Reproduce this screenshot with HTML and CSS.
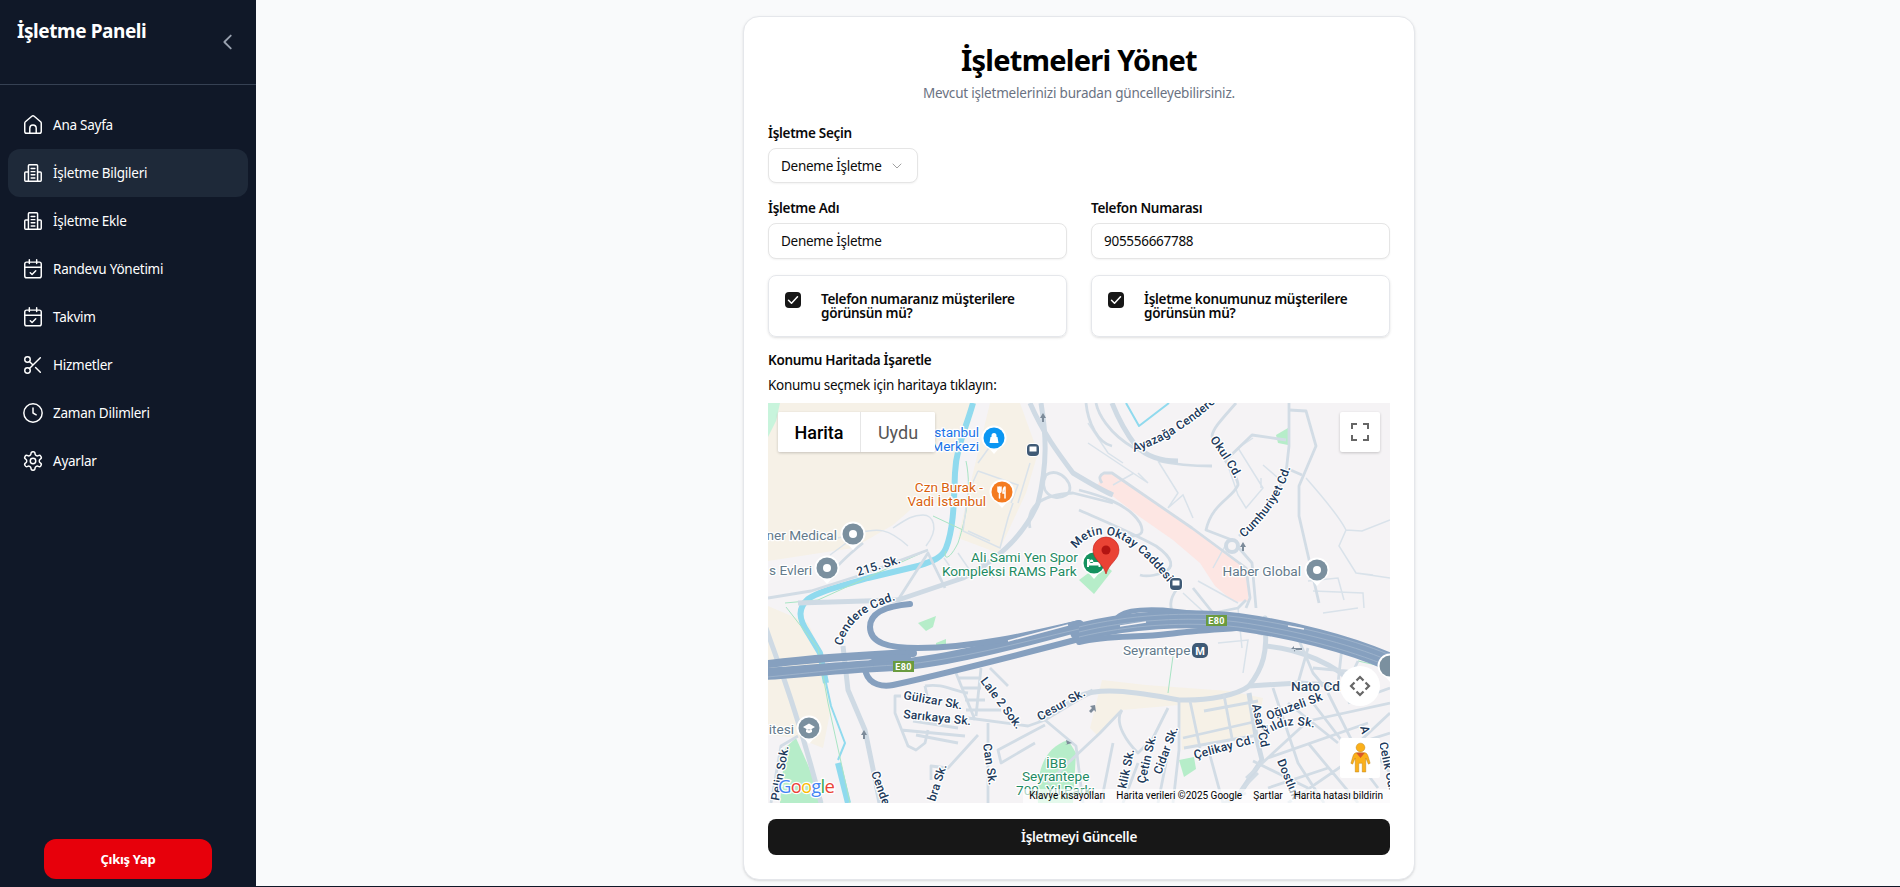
FILE: index.html
```html
<!DOCTYPE html>
<html lang="tr">
<head>
<meta charset="utf-8">
<title>İşletmeleri Yönet</title>
<link rel="stylesheet" href="styles.css">
</head>
<body>
<svg class="defs" width="0" height="0">
  <defs>
    <g id="i-build"><path d="M7 21V4a1 1 0 0 1 1-1h8a1 1 0 0 1 1 1v17"/><path d="M7 11H4a1 1 0 0 0-1 1v8a1 1 0 0 0 1 1h16a1 1 0 0 0 1-1v-8a1 1 0 0 0-1-1h-3"/><path d="M10 7h4M10 10.500h4M10 14h4M10 17.500h4"/></g>
    <g id="i-cal"><rect x="3" y="4.500" width="18" height="17" rx="2"/><path d="M8 2v4M16 2v4M3 10h18M9 16l2 2 4-4"/></g>
    <g id="pinbase"><path d="M-12.500 0a12.500 12.500 0 1 1 25 0c0 6-5 9-9 12l-3.500 4-3.500-4c-4-3-9-6-9-12z" fill="#fff"/></g>
  </defs>
</svg>
<div class="app">
  <aside class="sidebar">
    <div class="side-head">
      <h2 class="brand">İşletme Paneli</h2>
      <svg class="collapse" viewBox="0 0 24 24"><path d="M15 5l-7 7 7 7"/></svg>
    </div>
    <nav class="nav">
      <a class="nav-item"><svg class="ico" viewBox="0 0 24 24"><path d="M3 10a2 2 0 0 1 .709-1.528l7-5.999a2 2 0 0 1 2.582 0l7 5.999A2 2 0 0 1 21 10v9a2 2 0 0 1-2 2H5a2 2 0 0 1-2-2z"/><path d="M8.500 21v-5.500a3.500 3.500 0 0 1 7 0V21"/></svg><span>Ana Sayfa</span></a>
      <a class="nav-item active"><svg class="ico" viewBox="0 0 24 24"><use href="#i-build"/></svg><span>İşletme Bilgileri</span></a>
      <a class="nav-item"><svg class="ico" viewBox="0 0 24 24"><use href="#i-build"/></svg><span>İşletme Ekle</span></a>
      <a class="nav-item"><svg class="ico" viewBox="0 0 24 24"><use href="#i-cal"/></svg><span>Randevu Yönetimi</span></a>
      <a class="nav-item"><svg class="ico" viewBox="0 0 24 24"><use href="#i-cal"/></svg><span>Takvim</span></a>
      <a class="nav-item"><svg class="ico" viewBox="0 0 24 24"><circle cx="6" cy="6" r="3"/><circle cx="6" cy="18" r="3"/><path d="M8.120 8.120 12 12M20 4 8.120 15.880M14.800 14.800 20 20"/></svg><span>Hizmetler</span></a>
      <a class="nav-item"><svg class="ico" viewBox="0 0 24 24"><circle cx="12" cy="12" r="10"/><path d="M12 6.500V12l3.500 2"/></svg><span>Zaman Dilimleri</span></a>
      <a class="nav-item"><svg class="ico" viewBox="0 0 24 24"><path d="M12.220 2h-.44a2 2 0 0 0-2 2v.18a2 2 0 0 1-1 1.730l-.43.25a2 2 0 0 1-2 0l-.15-.08a2 2 0 0 0-2.730.73l-.22.38a2 2 0 0 0 .73 2.730l.15.1a2 2 0 0 1 1 1.720v.51a2 2 0 0 1-1 1.740l-.15.09a2 2 0 0 0-.73 2.730l.22.38a2 2 0 0 0 2.730.73l.15-.08a2 2 0 0 1 2 0l.43.25a2 2 0 0 1 1 1.730V20a2 2 0 0 0 2 2h.44a2 2 0 0 0 2-2v-.18a2 2 0 0 1 1-1.730l.43-.25a2 2 0 0 1 2 0l.15.08a2 2 0 0 0 2.730-.73l.22-.39a2 2 0 0 0-.73-2.730l-.15-.08a2 2 0 0 1-1-1.740v-.5a2 2 0 0 1 1-1.740l.15-.09a2 2 0 0 0 .73-2.730l-.22-.38a2 2 0 0 0-2.730-.73l-.15.08a2 2 0 0 1-2 0l-.43-.25a2 2 0 0 1-1-1.730V4a2 2 0 0 0-2-2z"/><circle cx="12" cy="12" r="3"/></svg><span>Ayarlar</span></a>
    </nav>
    <div class="side-foot"><button class="logout">Çıkış Yap</button></div>
  </aside>

  <main class="main">
    <section class="card">
      <header class="card-head">
        <h1 class="title">İşletmeleri Yönet</h1>
        <p class="subtitle">Mevcut işletmelerinizi buradan güncelleyebilirsiniz.</p>
      </header>

      <div class="field sel-field">
        <label class="label">İşletme Seçin</label>
        <div class="select"><span>Deneme İşletme</span><svg class="sel-arrow" viewBox="0 0 24 24"><path d="M6 9l6 6 6-6"/></svg></div>
      </div>

      <div class="grid two">
        <div class="field"><label class="label">İşletme Adı</label><div class="input">Deneme İşletme</div></div>
        <div class="field"><label class="label">Telefon Numarası</label><div class="input">905556667788</div></div>
      </div>

      <div class="grid two checks">
        <div class="check-card"><span class="check"><svg viewBox="0 0 16 16"><path d="M3.500 8.300l3 3 6-6.500"/></svg></span><span class="check-text">Telefon numaranız müşterilere görünsün mü?</span></div>
        <div class="check-card"><span class="check"><svg viewBox="0 0 16 16"><path d="M3.500 8.300l3 3 6-6.500"/></svg></span><span class="check-text">İşletme konumunuz müşterilere görünsün mü?</span></div>
      </div>

      <h3 class="map-title">Konumu Haritada İşaretle</h3>
      <p class="map-hint">Konumu seçmek için haritaya tıklayın:</p>

      <div class="map">
        <svg class="map-svg" viewBox="0 0 622 400" width="622" height="400">
          <defs>
            <path id="p-cendere" d="M74 243C80 218 100 203 140 194"/>
            <path id="p-metin" d="M308 146C330 118 362 130 405 186"/>
            <path id="p-cumh" d="M476 135C495 118 512 98 522 66"/>
            <path id="p-okul" d="M442 37C450 48 462 64 472 86"/>
            <path id="p-ayaz" d="M366 49C395 40 425 22 460 -12"/>
            <path id="p-cesur" d="M272 318L336 282"/>
            <path id="p-yildiz" d="M498 333C512 322 525 319 552 326"/>
          </defs>
          <rect class="bg" width="622" height="400"/>
          <!-- land use -->
          <path class="beige" d="M0 0H208L192 55 185 100 150 100 125 122 85 145 0 158Z"/>
          <path class="beige" d="M222 0H252L270 50 258 90 230 150 190 135 205 70Z"/>
          <path class="beige" d="M0 203L40 220 52 247 63 305 55 345 30 335 0 332Z"/>
          <path class="beige" d="M334 277L378 282 461 288 495 295 488 330 414 347 411 302 354 307 330 333 322 325Z"/>
          <path class="mint" d="M0 0H12L8 18 0 34Z"/>
          <path class="park" d="M311 177L326 191 344 168 334 160Z"/>
          <path class="park" d="M150 220L168 213 165 224 158 228Z"/>
          <path class="park" d="M168 240L178 236 178 246 168 246Z"/>
          <path class="park" d="M508 32L520 25V42L510 40Z"/>
          <path class="park" d="M270 400C268 370 275 345 300 337L308 350 305 400Z"/>
          <path class="park" d="M17 345L28 335 40 362 55 400H12Z"/>
          <path class="park" d="M411 357L426 354 428 366 416 374Z"/>
          <path class="pink" d="M334 70L346 70 424 125 480 165 480 198 466 199 447 183 432 160 405 137 372 114 330 82Z"/>
          <!-- rivers -->
          <path class="river" d="M205 0C198 25 188 45 187 70 186 95 186 125 178 145 174 155 165 158 150 163L100 175C70 184 52 188 40 196 30 205 30 215 40 230L52 250 58 280"/>
          <path class="river thin" d="M58 280L63 303 77 340 70 357"/>
          <path class="river" d="M70 360L80 400"/>
          <path class="river thin" d="M358 0L371 23 401 0"/>
          <!-- thin paths -->
          <g class="thin-green">
            <path d="M198 58C205 90 195 125 190 140 180 160 175 155 178 148"/>
            <path d="M165 113L195 127M17 200L50 197 160 147"/>
            <path d="M18 204L50 245 60 300 82 400M405 253L400 290M590 258L622 265"/>
          </g>
          <!-- small roads -->
          <g class="r-small">
            <path d="M210 60L228 35M210 68L250 82 243 100M210 68L200 90 195 128 232 145 240 115 245 100M200 128L222 138"/>
            <path d="M176 155L190 175M190 150L205 172M205 150L225 175M250 100L262 60"/>
            <path d="M140 143C120 125 110 125 90 130L70 135M85 135L62 152M158 143C172 125 165 112 155 112 145 112 140 115 125 125"/>
            <path d="M320 20L340 50 355 60M320 40L380 80 370 70M345 82L366 70M390 58L410 90 400 105 415 92 425 115"/>
            <path d="M458 57L470 92 478 105 495 85 470 45 485 35M495 62L510 75M493 75V85"/>
            <path d="M538 75C560 100 572 115 578 127L571 143 588 170 605 172M578 127L594 128 622 117M588 170L622 175"/>
            <path d="M540 178L570 175 576 197M545 188L595 190 596 205M555 210L590 205"/>
            <path d="M415 190L440 213M430 178L470 200"/>
            <path d="M457 143L445 165"/>
            <path d="M450 240L480 237 475 270M474 245L470 205"/>
          </g>
          <g class="r-mid">
            <path d="M311 87C330 92 360 100 372 120 378 132 370 133 362 133"/>
            <path d="M311 107C340 120 360 128 388 143 405 155 408 165 394 170 385 173 378 174 372 172"/>
            <path d="M344 43C330 40 320 20 318 0M366 45C340 30 330 10 328 0"/>
            <path d="M391 58C400 60 420 63 444 63"/>
            <path d="M409 186C402 195 400 205 408 215M425 185L445 210 470 205 478 197"/>
            <path d="M334 80C330 75 332 72 336 70L344 70 424 125 478 165 482 195 478 205"/>
            <path d="M444 33C445 25 455 15 468 0M444 33C448 50 470 70 470 82 465 95 444 100 438 127L464 137"/>
            <path d="M521 0V43L518 70 501 107 471 133"/>
            <path d="M458 57L484 32 518 37"/>
            <path d="M521 7L538 8 548 43 531 83V113L551 200"/>
            <path d="M518 65L534 72"/>
            <path d="M464 137L484 160 488 205"/>
            <path d="M130 197L160 150 177 185"/>
            <path d="M0 195L43 188 90 173 160 147"/>
            <path d="M60 175C70 160 85 148 95 140"/>
            <path d="M278 72C292 62 310 85 298 92 285 100 270 88 278 72Z"/>
            <path d="M262 125C258 105 270 92 305 90L345 100"/>
          </g>
          <circle class="rb" cx="464" cy="143" r="6"/>
          <g class="r-big">
            <path d="M273 0C278 30 280 60 270 100 255 135 225 160 195 175L130 197 30 200"/>
            <path d="M262 0C275 30 290 50 305 70 330 85 340 90 345 92"/>
            <path d="M344 0C350 15 358 30 368 43 380 55 395 58 410 58"/>
            <path d="M75 243L80 287 97 327 112 400"/>
            <path d="M-2 225C10 260 30 310 53 400"/>
            <path d="M481 283C495 265 500 250 497 215L492 232"/>
            <path d="M270 316L325 288"/>
            <path d="M311 293C330 285 360 287 411 297 440 298 470 292 481 283L531 280 578 283"/>
            <path d="M481 290L488 333 494 357 472 390"/>
            <path d="M496 243C530 245 570 262 590 285"/>
          </g>
          <g class="r-mid">
            <path d="M188 270L207 317M213 265L208 313M190 275H213M195 285H213M197 297H217M198 307H233"/>
            <path d="M200 315L260 323 277 317 310 297M220 320V400M210 332L180 365 163 363V377"/>
            <path d="M133 293H127V310L140 343 148 347 157 340 160 327M133 327L197 333M157 283L160 297M157 283C175 280 185 288 200 290"/>
            <path d="M277 322L230 347 233 360 267 340M145 318L190 325M148 332L190 340"/>
            <path d="M277 317L308 343 315 400M30 333L13 343 3 400M222 265L240 283"/>
            <path d="M354 307L332 330 300 360 280 380M354 307C345 320 360 340 370 350L385 335 400 305M411 297V347L405 400M422 298L432 345M456 292L464 335M436 308L490 298M415 335L490 318M416 345L490 332"/>
            <path d="M333 400L345 340M355 400L370 360M390 400L400 350M440 345L455 400 478 390M478 375L540 318 622 300M500 355L600 320M520 400L600 345M540 340L590 400M560 290L600 370M600 340L622 370M505 285L530 360 556 400M540 245L530 280M590 258L575 290M460 400L490 370M622 310L590 340M530 235L545 270 555 282M575 235L570 280M545 265L600 270"/>
            <path d="M520 300L570 340M545 300L610 385M485 358L540 385M500 385L560 365M575 345L622 330M580 300L622 285"/>
          </g>
          <!-- highways -->
          <g class="hw">
            <path class="w10" d="M-2 271C40 268 90 263 130 262 180 258 250 240 311 223"/>
            <path class="w6" d="M0 261C40 256 100 252 145 250"/>
            <path class="w5" d="M142 201C118 203 102 210 102 224 102 240 120 245 150 245 205 245 260 232 311 220"/>
            <path class="w5" d="M140 254C105 254 95 262 98 270 102 282 115 284 125 282 170 272 250 252 311 236"/>
            <path class="w14" d="M311 229C360 217 420 213 470 219 520 226 580 240 624 260"/>
            <path class="w5" d="M311 239C340 232 370 235 400 231 430 227 460 226 480 224"/>
            <path class="w4" d="M346 220C350 207 372 206 395 207L442 212"/>
          </g>
          <g class="hw-lane">
            <path d="M0 274C60 268 100 263 130 262 190 257 250 240 311 226M311 229C360 217 420 213 470 219 520 226 580 240 622 258M311 224C360 212 420 208 470 214 520 221 580 234 622 252M311 234C360 222 420 218 470 224 520 231 580 246 622 264"/>
          </g>
          <path class="hw-white" d="M352 223L378 219M520 223L536 226M240 238L300 222"/>
          <!-- shields -->
          <g class="shield"><rect x="125" y="258" width="21" height="11"/><text x="135.500" y="267">E80</text></g>
          <g class="shield"><rect x="438" y="212" width="21" height="11"/><text x="448.500" y="221">E80</text></g>
          <!-- place labels -->
          <text class="lb blue" x="211" y="34" text-anchor="end">İstanbul</text>
          <text class="lb blue" x="211" y="48" text-anchor="end">Merkezi</text>
          <text class="lb orange" x="215" y="89" text-anchor="end">Czn Burak -</text>
          <text class="lb orange" x="218" y="103" text-anchor="end">Vadi İstanbul</text>
          <text class="lb gray" x="69" y="137" text-anchor="end">ner Medical</text>
          <text class="lb gray" x="44" y="172" text-anchor="end">s Evleri</text>
          <text class="lb gray" x="26" y="331" text-anchor="end">itesi</text>
          <text class="lb gray" x="533" y="173" text-anchor="end">Haber Global</text>
          <text class="lb gray" x="355" y="252">Seyrantepe</text>
          <text class="lb green" x="203" y="159">Ali Sami Yen Spor</text>
          <text class="lb green" x="174" y="173">Kompleksi RAMS Park</text>
          <text class="lb green" x="278" y="365">İBB</text>
          <text class="lb green" x="254" y="378">Seyrantepe</text>
          <text class="lb green" x="248" y="392">700. Yıl Parkı</text>
          <text class="lb navy" x="523" y="288">Nato Cd.</text>
          <!-- road labels -->
          <text class="rl" transform="translate(90 173) rotate(-17)">215. Sk.</text>
          <text class="rl"><textPath href="#p-cendere">Cendere Cad.</textPath></text>
          <text class="rl"><textPath href="#p-metin">Metin Oktay Caddesi</textPath></text>
          <text class="rl"><textPath href="#p-cumh">Cumhuriyet Cd.</textPath></text>
          <text class="rl"><textPath href="#p-okul">Okul Cd.</textPath></text>
          <text class="rl"><textPath href="#p-ayaz">Ayazağa Cendere</textPath></text>
          <text class="rl" transform="translate(212 278) rotate(53)">Lale 2 Sok.</text>
          <text class="rl" transform="translate(135 296) rotate(10)">Gülizar Sk.</text>
          <text class="rl" transform="translate(135 315) rotate(6)">Sarıkaya Sk.</text>
          <text class="rl" transform="translate(215 341) rotate(82)">Can Sk.</text>
          <text class="rl" transform="translate(103 370) rotate(70)">Cendere</text>
          <text class="rl" transform="translate(167 399) rotate(-72)">bra Sk.</text>
          <text class="rl" transform="translate(11 398) rotate(-80)">Pelin Sok.</text>
          <text class="rl"><textPath href="#p-cesur">Cesur Sk.</textPath></text>
          <text class="rl" transform="translate(500 317) rotate(-20)">Oğuzeli Sk</text>
          <text class="rl"><textPath href="#p-yildiz">Yıldız Sk.</textPath></text>
          <text class="rl" transform="translate(427 356) rotate(-15)">Çelikay Cd.</text>
          <text class="rl" transform="translate(484 302) rotate(78)">Asaf Cd</text>
          <text class="rl" transform="translate(509 358) rotate(68)">Dostluk</text>
          <text class="rl" transform="translate(393 372) rotate(-70)">Cidar Sk.</text>
          <text class="rl" transform="translate(377 381) rotate(-77)">Çetin Sk.</text>
          <text class="rl" transform="translate(358 386) rotate(-78)">klik Sk.</text>
          <text class="rl" transform="translate(611 340) rotate(78)">Çelik Cd.</text>
          <text class="rl" transform="translate(592 324) rotate(75)">A</text>
          <!-- POI pins -->
          <g transform="translate(226 35)"><use href="#pinbase"/><circle r="10.500" class="c-blue"/><path class="glyph" d="M-4.500 5h9l-1-6h-7zM-2.500 -1v-1.500a2.500 2.500 0 0 1 5 0V-1"/></g>
          <g transform="translate(234 89)"><use href="#pinbase"/><circle r="10.500" class="c-orange"/><path class="stroke-w" d="M-4 -5v4a1.500 1.500 0 0 0 3 0v-4M-2.500 -5V6M3 -5v11M3 -5c-2 1-2 4-2 6h2"/></g>
          <g transform="translate(85 131)"><use href="#pinbase"/><circle r="10.500" class="c-gray"/><circle r="4" class="c-white"/></g>
          <g transform="translate(59 165)"><use href="#pinbase"/><circle r="10.500" class="c-gray"/><circle r="4" class="c-white"/></g>
          <g transform="translate(549 167)"><use href="#pinbase"/><circle r="10.500" class="c-gray"/><circle r="4" class="c-white"/></g>
          <g transform="translate(622 263)"><use href="#pinbase"/><circle r="10.500" class="c-gray"/></g>
          <g transform="translate(41 325)"><use href="#pinbase"/><circle r="10.500" class="c-gray"/><path class="glyph" d="M-6 -1L0 -4.500 6 -1 0 2.500ZM-3 1.500v2.500c2 1.500 4 1.500 6 0v-2.500"/></g>
          <g transform="translate(326 160)"><use href="#pinbase"/><circle r="10.500" class="c-green"/><path class="glyph" d="M-7 -4h2.500v3h8c2 0 3 1.500 3 3v2h-2v-1.500h-9.500v1.500h-2zM-2.500 -3.500a1.800 1.800 0 1 0 .1 0z"/></g>
          <!-- transit -->
          <g transform="translate(265 47)"><rect x="-7" y="-7" width="14" height="14" rx="5" class="tr-halo"/><rect x="-6" y="-6" width="12" height="12" rx="4" class="c-slate"/><path class="glyph" d="M-3.500 -3.500h7v5h-7zM-1.500 3.500v-2M1.500 3.500v-2"/></g>
          <g transform="translate(408 181)"><rect x="-7" y="-7" width="14" height="14" rx="5" class="tr-halo"/><rect x="-6" y="-6" width="12" height="12" rx="4" class="c-slate"/><path class="glyph" d="M-3.500 -3.500h7v5h-7zM-1.500 3.500v-2M1.500 3.500v-2"/></g>
          <g transform="translate(432 248)"><rect x="-8" y="-8" width="16" height="15" rx="5" class="c-slate"/><text class="metro" x="0" y="4">M</text></g>
          <!-- direction arrows -->
          <path class="arrow" d="M275 10l-3 5h2v4h2v-4h2zM475 139l-3 5h2v4h2v-4h2zM96 327l-3 5h2v4h2v-4h2zM304 340l-6-3 1 4-2 1zM327 302l-5 1 2 2-3 3 2 2 3-3 2 2zM528 246h-5l3-3v2h8v2h-8v2z"/>
          <!-- Google wordmark -->
          <text class="glogo" x="10" y="390"><tspan class="g-b">G</tspan><tspan class="g-r">o</tspan><tspan class="g-y">o</tspan><tspan class="g-b">g</tspan><tspan class="g-g">l</tspan><tspan class="g-r">e</tspan></text>
          <!-- marker -->
          <path class="m-red" d="M338 171C335 160 325 157 325 147a13 13 0 0 1 26 0C351 157 341 160 338 171Z"/>
          <circle class="m-dark" cx="338" cy="147" r="4.500"/>
        </svg>

        <div class="map-type">
          <button class="mt-btn on">Harita</button>
          <button class="mt-btn">Uydu</button>
        </div>
        <button class="ctl fullscreen"><svg viewBox="0 0 18 18"><path d="M0 6V0h6v2H2v4zM12 0h6v6h-2V2h-4zM18 12v6h-6v-2h4v-4zM6 18H0v-6h2v4h4z"/></svg></button>
        <button class="ctl pan"><svg viewBox="0 0 24 24"><path d="M8.500 6.500L12 3l3.500 3.500M17.500 8.500L21 12l-3.500 3.500M15.500 17.500L12 21l-3.500-3.500M6.500 15.500L3 12l3.500-3.500"/></svg></button>
        <button class="ctl pegman"><svg viewBox="0 0 24 36"><circle cx="12" cy="6" r="5" class="peg"/><path class="peg" d="M7 12h10c2 0 3 2 4 5l2 7-2 1-3-7v16h-4V24h-4v10H6V18l-3 7-2-1 2-7c1-3 2-5 4-5z"/><path class="scarf" d="M7 12h10l-5 6z"/></svg></button>
        <div class="attrib">
          <span>Klavye kısayolları</span><span>Harita verileri ©2025 Google</span><span>Şartlar</span><span>Harita hatası bildirin</span>
        </div>
      </div>

      <button class="submit">İşletmeyi Güncelle</button>
    </section>
  </main>
</div>
</body>
</html>
```
FILE: styles.css
```css
* { box-sizing: border-box; }
html, body { margin: 0; height: 100%; overflow: hidden; }
body { font-family: "Noto Sans", "Open Sans", sans-serif; color: #0a0a0a; background: #f9fafb; }
.defs { position: absolute; }
.app { display: flex; height: 887px; }

/* sidebar */
.sidebar { width: 256px; flex: none; background: #101828; color: #fff; display: flex; flex-direction: column; }
.side-head { height: 85px; border-bottom: 1px solid #364153; padding: 17px 16px 0 17px; display: flex; justify-content: space-between; align-items: flex-start; }
.brand { margin: 0; font-size: 19px; line-height: 28px; font-weight: 700; letter-spacing: -.42px; }
.collapse { width: 22px; height: 22px; margin-top: 14px; margin-right: 1px; fill: none; stroke: #99a1af; stroke-width: 2; stroke-linecap: round; stroke-linejoin: round; }
.nav { padding: 16px 8px 0 8px; display: flex; flex-direction: column; }
.nav-item { height: 48px; display: flex; align-items: center; gap: 9px; padding-left: 14px; border-radius: 12px; font-size: 13.500px; letter-spacing: -.25px; color: #fff; }
.nav-item.active { background: #1e2939; }
.ico { width: 22px; height: 22px; fill: none; stroke: #fff; stroke-width: 1.600; stroke-linecap: round; stroke-linejoin: round; flex: none; }
.side-foot { margin-top: auto; padding: 0 44px 8px; }
.logout { width: 168px; height: 40px; border: 0; border-radius: 12px; background: #e7000b; color: #fff; font: 700 13px "Noto Sans", sans-serif; letter-spacing: -.3px; }

/* main */
.main { flex: 1; height: 887px; padding: 16px 0 0 2px; display: flex; justify-content: center; align-items: flex-start; border-bottom: 1px solid #101828; }
.card { width: 672px; height: 864px; background: #fff; border: 1px solid #e5e7eb; border-radius: 16px; box-shadow: 0 1px 3px rgba(0,0,0,.1), 0 1px 2px -1px rgba(0,0,0,.1); padding: 25px 24px 24px; }
.card-head { text-align: center; margin-bottom: 23px; }
.title { margin: 0; font-size: 29px; line-height: 36px; font-weight: 700; letter-spacing: -.75px; color: #000; }
.subtitle { margin: 5px 0 0; font-size: 13.500px; line-height: 20px; color: #6a7282; letter-spacing: -.2px; }
.label { display: block; font-size: 13.500px; line-height: 14px; font-weight: 600; letter-spacing: -.3px; margin-bottom: 8px; }
.field { min-width: 0; }
.sel-field { margin-bottom: 18px; }
.select { width: 150px; height: 35px; border: 1px solid #e5e5e5; border-radius: 8px; box-shadow: 0 1px 2px rgba(0,0,0,.05); display: flex; align-items: center; justify-content: space-between; padding: 0 12px; font-size: 13.500px; letter-spacing: -.28px; background: #fff; }
.sel-arrow { width: 16px; height: 16px; fill: none; stroke: #a1a1a1; stroke-width: 1.500; stroke-linecap: round; stroke-linejoin: round; }
.grid.two { display: grid; grid-template-columns: 1fr 1fr; gap: 24px; }
.input { height: 36px; border: 1px solid #e5e5e5; border-radius: 8px; box-shadow: 0 1px 2px rgba(0,0,0,.05); display: flex; align-items: center; padding: 0 12px; font-size: 13.500px; letter-spacing: -.28px; background: #fff; }
.checks { margin-top: 16px; }
.check-card { height: 62px; border: 1px solid #e5e7eb; border-radius: 8px; box-shadow: 0 1px 3px rgba(0,0,0,.1), 0 1px 2px -1px rgba(0,0,0,.1); padding: 16px; display: flex; gap: 20px; align-items: flex-start; }
.check { width: 16px; height: 16px; border-radius: 4px; background: #171717; flex: none; display: flex; }
.check svg { width: 16px; height: 16px; fill: none; stroke: #fff; stroke-width: 1.500; stroke-linecap: round; stroke-linejoin: round; }
.check-text { font-size: 13.500px; line-height: 14px; font-weight: 600; letter-spacing: -.3px; }
.map-title { margin: 16px 0 0; font-size: 13.500px; line-height: 14px; font-weight: 600; letter-spacing: -.3px; }
.map-hint { margin: 8px 0 8px; font-size: 13.500px; line-height: 20px; letter-spacing: -.28px; }
.submit { display: block; width: 100%; height: 36px; margin-top: 16px; border: 0; border-radius: 8px; background: #171717; color: #fafafa; font: 600 13.500px "Noto Sans", sans-serif; letter-spacing: -.3px; }

/* map */
.map { position: relative; width: 622px; height: 400px; overflow: hidden; background: #f5f4f5; }
.map-svg { display: block; }
.bg { fill: #f5f3f5; }
.beige { fill: #f6f1e7; }
.mint { fill: #c8f4dc; }
.park { fill: #b6edc9; }
.pink { fill: #fde6e3; }
.river { fill: none; stroke: #90daee; stroke-width: 6; stroke-linejoin: round; }
.river.thin { stroke-width: 2; }
.thin-green path { fill: none; stroke: #a8e4c4; stroke-width: 1; }
.r-small path { fill: none; stroke: #d9e2ea; stroke-width: 1.500; }
.r-mid path { fill: none; stroke: #d2dce5; stroke-width: 2.800; stroke-linejoin: round; }
.r-big path { fill: none; stroke: #cfdae4; stroke-width: 5; stroke-linejoin: round; }
.rb { fill: #f5f3f5; stroke: #cfdae4; stroke-width: 4; }
.hw path { fill: none; stroke: #86a0bf; stroke-linecap: round; }
.hw .w14 { stroke-width: 18; }
.hw .w10 { stroke-width: 12; }
.hw .w6 { stroke-width: 8; }
.hw .w5 { stroke-width: 6; }
.hw .w4 { stroke-width: 5; }
.hw-lane path { fill: none; stroke: #a2b6cd; stroke-width: .8; }
.hw-white { fill: none; stroke: #f5f3f5; stroke-width: 1.500; }
.shield rect { fill: #6a9b3f; }
.shield text { font: 700 9px Roboto, sans-serif; fill: #fff; text-anchor: middle; letter-spacing: .3px; }
.lb { font: 400 13.600px Roboto, sans-serif; stroke: #fff; stroke-width: 2.500; paint-order: stroke; stroke-linejoin: round; }
.lb.blue { fill: #1a73e8; }
.lb.orange { fill: #d95f0e; }
.lb.gray { fill: #637a8b; }
.lb.green { fill: #1e8a62; }
.lb.navy { fill: #2a4460; font-weight: 500; }
.rl { font: 500 12px Roboto, sans-serif; fill: #20395a; stroke: #fff; stroke-width: 2.500; paint-order: stroke; stroke-linejoin: round; letter-spacing: .2px; }
.c-blue { fill: #0b96f2; }
.c-orange { fill: #f47b20; }
.c-gray { fill: #7b909f; }
.c-green { fill: #15925f; }
.c-white { fill: #fff; }
.c-slate { fill: #3f5a76; }
.tr-halo { fill: #fff; }
.glyph { fill: #fff; stroke: none; }
.stroke-w { fill: none; stroke: #fff; stroke-width: 1.500; stroke-linecap: round; }
.metro { font: 700 11px Roboto, sans-serif; fill: #fff; text-anchor: middle; }
.arrow { fill: #7d8b9a; }
.glogo { font: 500 18.500px "Open Sans", sans-serif; stroke: #fff; stroke-width: 2.500; paint-order: stroke; letter-spacing: -.8px; }
.g-b { fill: #4285f4; }
.g-r { fill: #ea4335; }
.g-y { fill: #fbbc05; }
.g-g { fill: #34a853; }
.m-red { fill: #ea4335; stroke: #c5221f; stroke-width: .6; }
.m-dark { fill: #b31412; }

.map-type { position: absolute; left: 10px; top: 9px; height: 40px; display: flex; background: #fff; border-radius: 2px; box-shadow: 0 1px 3px rgba(0,0,0,.2); }
.mt-btn { border: 0; background: #fff; height: 40px; width: 74px; padding: 0; font: 400 18px Roboto, sans-serif; color: #565656; border-radius: 2px; }
.mt-btn.on { font-weight: 500; color: #000; width: 83px; border-right: 1px solid #e6e6e6; border-radius: 2px 0 0 2px; }
.ctl { position: absolute; width: 40px; height: 40px; padding: 0; border: 0; background: #fff; border-radius: 2px; box-shadow: 0 1px 3px rgba(0,0,0,.2); display: flex; align-items: center; justify-content: center; }
.fullscreen { left: 572px; top: 9px; }
.fullscreen svg { width: 18px; height: 18px; fill: #666; }
.pan { left: 572px; top: 263px; border-radius: 50%; box-shadow: none; }
.pan svg { width: 24px; height: 24px; fill: none; stroke: #666; stroke-width: 2.200; }
.pegman { left: 572px; top: 335px; box-shadow: none; }
.pegman svg { width: 21px; height: 32px; }
.peg { fill: #fbb01a; stroke: #b57d10; stroke-width: .5; }
.scarf { fill: #d8582a; }
.attrib { position: absolute; right: 0; bottom: 0; height: 14px; padding: 0 7px 0 6px; display: flex; gap: 11px; font: 400 10px/14px Roboto, sans-serif; color: #000; background: rgba(255,255,255,.65); white-space: nowrap; }
```
